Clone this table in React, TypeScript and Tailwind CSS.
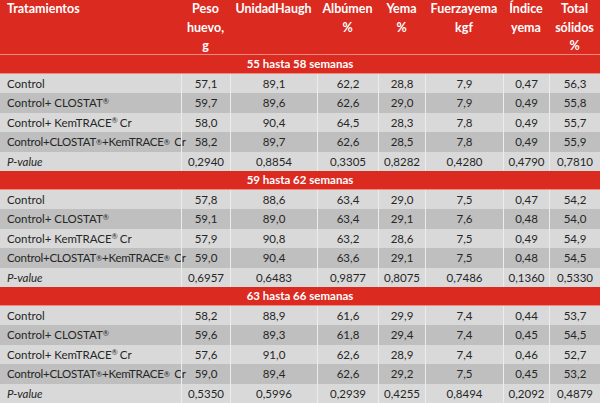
import React from "react";

type Row = { name: React.ReactNode; vals: string[]; p?: boolean };

const R = ({ gap = true }: { gap?: boolean }) => (
  <sup className={`text-[7.5px] relative -top-[1px] ${gap ? "mr-[2px]" : ""}`}>®</sup>
);

const names: React.ReactNode[] = [
  "Control",
  <>Control+ CLOSTAT<R /></>,
  <>Control+ KemTRACE<R /> Cr</>,
  <span className="tracking-[-0.25px]">
    Control+CLOSTAT<R gap={false} />+KemTRACE<R /> Cr
  </span>,
];

const groups: { title: string; rows: string[][]; p: string[] }[] = [
  {
    title: "55 hasta 58 semanas",
    rows: [
      ["57,1", "89,1", "62,2", "28,8", "7,9", "0,47", "56,3"],
      ["59,7", "89,6", "62,6", "29,0", "7,9", "0,49", "55,8"],
      ["58,0", "90,4", "64,5", "28,3", "7,8", "0,49", "55,7"],
      ["58,2", "89,7", "62,6", "28,5", "7,8", "0,49", "55,9"],
    ],
    p: ["0,2940", "0,8854", "0,3305", "0,8282", "0,4280", "0,4790", "0,7810"],
  },
  {
    title: "59 hasta 62 semanas",
    rows: [
      ["57,8", "88,6", "63,4", "29,0", "7,5", "0,47", "54,2"],
      ["59,1", "89,0", "63,4", "29,1", "7,6", "0,48", "54,0"],
      ["57,9", "90,8", "63,2", "28,6", "7,5", "0,49", "54,9"],
      ["59,0", "90,4", "63,6", "29,1", "7,5", "0,48", "54,5"],
    ],
    p: ["0,6957", "0,6483", "0,9877", "0,8075", "0,7486", "0,1360", "0,5330"],
  },
  {
    title: "63 hasta 66 semanas",
    rows: [
      ["58,2", "88,9", "61,6", "29,9", "7,4", "0,44", "53,7"],
      ["59,6", "89,3", "61,8", "29,4", "7,4", "0,45", "54,5"],
      ["57,6", "91,0", "62,6", "28,9", "7,4", "0,46", "52,7"],
      ["59,0", "89,4", "62,6", "29,2", "7,5", "0,45", "53,2"],
    ],
    p: ["0,5350", "0,5996", "0,2939", "0,4255", "0,8494", "0,2092", "0,4879"],
  },
];

const cols = "grid grid-cols-[181px_49px_87px_61px_47px_78px_46px_51px]";

function DataRow({ row, dark }: { row: Row; dark: boolean }) {
  return (
    <div className={`${cols} h-[19.5px] text-[11.5px] ${dark ? "bg-[#bfbfbf]" : "bg-[#d9d9d9]"}`}>
      <div className={`pl-[7px] flex items-center whitespace-nowrap ${row.p ? "italic" : ""}`}>
        {row.name}
      </div>
      {row.vals.map((v, i) => (
        <div key={i} className="flex items-center justify-center border-l border-[#ececec]">
          {v}
        </div>
      ))}
    </div>
  );
}

export default function App() {
  return (
    <div className="w-[600px] h-[403px] overflow-hidden bg-[#d9d9d9] text-[#262626] text-[12.5px] leading-none font-['Lato','Open_Sans',sans-serif]">
      {/* header */}
      <div className={`${cols} h-[55px] bg-[#db2a1f] text-white font-bold leading-[18.5px] border-b border-[#f08a80]`}>
        <div className="pl-[7px]">Tratamientos</div>
        <div className="text-center">Peso<br />huevo,<br />g</div>
        <div className="text-center">UnidadHaugh</div>
        <div className="text-center">Albúmen<br />%</div>
        <div className="text-center">Yema<br />%</div>
        <div className="text-center">Fuerzayema<br />kgf</div>
        <div className="text-center">Índice<br />yema</div>
        <div className="text-center">Total<br />sólidos<br />%</div>
      </div>

      {groups.map((g) => (
        <div key={g.title}>
          <div className="h-[18.5px] bg-[#db2a1f] text-white font-bold text-[11.5px] flex items-center justify-center border-b border-[#f08a80]">
            {g.title}
          </div>
          {g.rows.map((vals, i) => (
            <DataRow key={i} row={{ name: names[i], vals }} dark={i % 2 === 1} />
          ))}
          <DataRow row={{ name: "P-value", vals: g.p, p: true }} dark={false} />
        </div>
      ))}
    </div>
  );
}
